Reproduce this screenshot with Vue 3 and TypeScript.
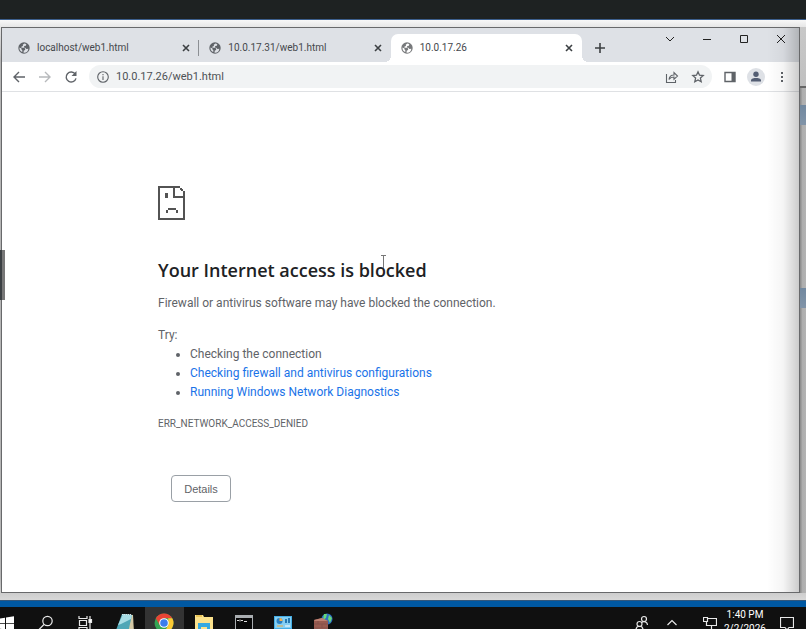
<script setup lang="ts">
import { ref } from 'vue'

interface Tab {
  id: number
  title: string
}

const tabs = ref<Tab[]>([
  { id: 1, title: 'localhost/web1.html' },
  { id: 2, title: '10.0.17.31/web1.html' },
  { id: 3, title: '10.0.17.26' },
])
const activeTab = ref(3)
const address = ref('10.0.17.26/web1.html')
</script>

<template>
  <div class="desktop">
    <div class="host-bar"></div>

    <div class="backdrop">
      <main class="browser">
        <header class="tab-strip">
          <div class="tabs">
            <div
              v-for="tab in tabs"
              :key="tab.id"
              class="tab"
              :class="{ active: tab.id === activeTab }"
            >
              <button class="tab-select" @click="activeTab = tab.id">
                <svg class="favicon" viewBox="0 0 16 16" aria-hidden="true">
                  <circle cx="8" cy="8" r="7.6" fill="currentColor" />
                  <path d="M8.5 2 6.300 3.500l.4 1.800-2 .8-.2 1.600h4l1.200 1.500-.4 1.600-1.700.7-.2 2.700a6 6 0 0 0 6.400-5.300l-2.600.3-1.500-1.700-1.700-.3.3-1.800 2.200-.4.6-1.700A6 6 0 0 0 8.500 2ZM2 7.300a6 6 0 0 0 3.500 6l.5-1.800-1.300-1.500V8.500Z" class="land" />
                </svg>
                <span>{{ tab.title }}</span>
              </button>
              <button class="tab-close" :aria-label="'Close ' + tab.title">
                <svg width="8" height="8" viewBox="0 0 8 8"><path d="m1 1 6 6M7 1 1 7" stroke="currentColor" stroke-width="1.6" /></svg>
              </button>
            </div>
          </div>
          <button class="new-tab" aria-label="New tab">
            <svg width="10" height="10" viewBox="0 0 10 10"><path d="M5 0v10M0 5h10" stroke="currentColor" stroke-width="1.6" /></svg>
          </button>
          <div class="window-controls">
            <button aria-label="Search tabs">
              <svg width="10" height="10" viewBox="0 0 10 10"><path d="m1 3 4 4 4-4" /></svg>
            </button>
            <button aria-label="Minimize">
              <svg width="10" height="10" viewBox="0 0 10 10"><path d="M1 5.500h8" /></svg>
            </button>
            <button aria-label="Maximize">
              <svg width="10" height="10" viewBox="0 0 10 10"><path d="M1.500 1.500h7v7h-7Z" /></svg>
            </button>
            <button aria-label="Close">
              <svg width="10" height="10" viewBox="0 0 10 10"><path d="m1 1 8 8M9 1 1 9" /></svg>
            </button>
          </div>
        </header>

        <nav class="toolbar">
          <button class="tool" aria-label="Back">
            <svg width="14" height="14" viewBox="0 0 14 14"><path d="M13 7H2m5-5L2 7l5 5" /></svg>
          </button>
          <button class="tool" aria-label="Forward" disabled>
            <svg width="14" height="14" viewBox="0 0 14 14"><path d="M1 7h11M7 2l5 5-5 5" /></svg>
          </button>
          <button class="tool" aria-label="Reload">
            <svg width="14" height="14" viewBox="0 0 14 14"><path d="M11.300 4.200A5 5 0 1 0 12 8.400" /><path d="M12.500 1v5h-5Z" class="solid" /></svg>
          </button>
          <div class="omnibox">
            <button class="small-tool" aria-label="Site information">
              <svg width="12" height="12" viewBox="0 0 12 12"><circle cx="6" cy="6" r="5.300" /><path d="M6 5.300v3.700M6 3v1.300" /></svg>
            </button>
            <input v-model="address" class="address" aria-label="Address" />
            <button class="small-tool" aria-label="Share">
              <svg width="14" height="14" viewBox="0 0 14 14"><path d="M1.500 4v8.500h9V10M4 9.500c.4-3 2-4.500 5-4.500V2.500L12.500 6 9 9.300V7C7 7 5.300 7.500 4 9.500Z" /></svg>
            </button>
            <button class="small-tool" aria-label="Bookmark this tab">
              <svg width="14" height="14" viewBox="0 0 14 14"><path d="m7 1.800 1.500 3.400 3.700.4-2.800 2.500.8 3.700L7 9.900l-3.200 1.900.8-3.700-2.800-2.500 3.700-.4Z" stroke-width="1.300" /></svg>
            </button>
          </div>
          <button class="tool" aria-label="Side panel">
            <svg width="12" height="12" viewBox="0 0 12 12"><path d="M1 1.500h10v9H1Z" /><path d="M7.500 1H11v10H7.500Z" class="solid" /></svg>
          </button>
          <button class="tool" aria-label="Profile">
            <svg width="18" height="18" viewBox="0 0 18 18"><circle cx="9" cy="9" r="9" class="disc" /><circle cx="9" cy="6.300" r="2.700" class="person" /><path d="M4 13.500v-1C4 10.500 7 10 9 10s5 .5 5 2.500v1Z" class="person" /></svg>
          </button>
          <button class="tool" aria-label="Menu">
            <svg width="4" height="12" viewBox="0 0 4 12"><path d="M1 1h2v2H1ZM1 5h2v2H1ZM1 9h2v2H1Z" class="solid" /></svg>
          </button>
        </nav>

        <section class="page">
          <svg class="sad-page" width="27" height="34" viewBox="0 0 27 34" aria-hidden="true">
            <path d="M0 0h22v2H2v30h23V12H15V2h2v8h8V5h2v29H0ZM22 2h2v2h-2ZM23 3h2v2h-2ZM7 7h3v5H7ZM10 22h8v2h-8ZM8 24h2v3H8ZM18 24h2v3h-2Z" />
          </svg>
          <h1>Your Internet access is blocked</h1>
          <p>Firewall or antivirus software may have blocked the connection.</p>
          <p class="try">Try:</p>
          <ul>
            <li>Checking the connection</li>
            <li><a href="#">Checking firewall and antivirus configurations</a></li>
            <li><a href="#">Running Windows Network Diagnostics</a></li>
          </ul>
          <div class="error-code">ERR_NETWORK_ACCESS_DENIED</div>
          <button class="details">Details</button>
        </section>

        <div class="edge-shade"></div>
      </main>
      <div class="edge">
        <div class="edge-head"></div>
        <div class="edge-rule"></div>
        <div class="edge-gap"></div>
        <div class="edge-select"></div>
        <div class="edge-body"></div>
        <div class="edge-select"></div>
      </div>
      <svg class="pointer" width="7" height="17" viewBox="0 0 7 17" aria-hidden="true"><path d="M1 .5h5M3.500 1v12" /></svg>
      <div class="side-handle"></div>
    </div>

    <div class="wallpaper"></div>

    <footer class="taskbar">
      <div class="taskbar-row">
        <button class="start" aria-label="Start">
          <svg width="14" height="15" viewBox="0 0 14 15"><path d="M0 2.500 5 1.700v5.500H0ZM6 1.500l8-1.300v7H6ZM0 8h5v5.500l-5-.8ZM6 8h8v7l-8-1.300Z" fill="#fff" /></svg>
        </button>
        <button class="task" aria-label="Search">
          <svg width="16" height="16" viewBox="0 0 16 16" class="line"><circle cx="9.500" cy="6" r="4.700" /><path d="m6 9.500-5 5" /></svg>
        </button>
        <button class="task" aria-label="Task view">
          <svg width="16" height="16" viewBox="0 0 16 16" class="line"><path d="M2 1v2.500h8V1M2.500 5.500h7v5h-7ZM2 15v-2.500h8V15M13 1v3M13 8v7" /><path d="M12 4.500h2.500v3H12Z" fill="#fff" /></svg>
        </button>
        <div class="apps">
          <button aria-label="Notepad">
            <svg width="20" height="22" viewBox="0 0 20 22"><path d="m8 2 10 1 1 17-5 1H2Z" fill="#d5c9a5" /><path d="m7 2 10 1-4 18H0Z" fill="#4fa6b6" /><path d="m8 2 9 1-1 4L6 12 3 13Z" fill="#a8dce4" /><path d="M7 2.500h10" stroke="#d9e6e8" stroke-dasharray="1 1" /></svg>
          </button>
          <button class="running" aria-label="Chrome">
            <svg width="20" height="20" viewBox="0 0 20 20"><circle cx="10" cy="10" r="9.500" fill="#34a353" /><path d="M1.800 5.300a9.500 9.500 0 0 1 16.500 0H10l-4 7.200Z" fill="#e94435" /><path d="M18.300 5.300A9.500 9.500 0 0 1 10 19.500l4.200-7.200V5.300Z" fill="#fcc934" /><circle cx="10" cy="10" r="4.800" fill="#fff" /><circle cx="10" cy="10" r="3.800" fill="#3b7ded" /></svg>
          </button>
          <button aria-label="File Explorer">
            <svg width="18" height="18" viewBox="0 0 18 18"><path d="M0 1h8l1 2h9v15H0Z" fill="#fce28c" /><path d="M1 2h6" stroke="#d6a524" /><path d="M3 9h12v9h-3v-5H6v5H3Z" fill="#35a9e1" /></svg>
          </button>
          <button aria-label="Command Prompt">
            <svg width="18" height="18" viewBox="0 0 18 18"><path d="M0 1h18v16H0Z" fill="#a9adb0" /><path d="M1 4h16v12H1Z" fill="#080808" /><path d="M2 6.500h2m1-1v2m1-1h2m1 1h3" stroke="#ddd" fill="none" /></svg>
          </button>
          <button aria-label="Control Panel">
            <svg width="18" height="16" viewBox="0 0 18 16"><path d="M0 1h18v14H0Z" fill="#45aee5" /><path d="M1 2h16v11H1Z" fill="#85cff3" /><circle cx="5.500" cy="6" r="3" fill="#277fc2" /><path d="M5.500 6V3a3 3 0 0 1 3 3Z" fill="#f4ae4b" /><path d="M11 4h2v4h-2ZM14 3h2v5h-2Z" fill="#2678af" /><path d="M3 11h6" stroke="#f1ab3b" /><path d="M11 11h5" stroke="#fff" /></svg>
          </button>
          <button aria-label="Firewall">
            <svg width="20" height="20" viewBox="0 0 20 20"><circle cx="14" cy="6" r="5.500" fill="#2d6fc4" /><path d="m11 1 3 0-1 4-3 2ZM16 2l3 3-2 5-2-4Z" fill="#67d878" /><path d="m1 7 8-2 6 3v11l-14 1Z" fill="#995b50" /><path d="m1 7 8-2 6 3H2Z" fill="#bd8172" /><path d="M1 11h14M1 15h14M5 8v3m4 0v4m-5 0v4" stroke="#85534a" /></svg>
          </button>
        </div>
        <div class="tray">
          <button aria-label="People">
            <svg width="14" height="16" viewBox="0 0 14 16" class="line"><circle cx="9" cy="4" r="2.500" /><path d="M6.500 7.500C9 5.500 12.500 7 12.500 10" /><circle cx="4.500" cy="9" r="2.500" /><path d="M1 15c0-5 7-5 7 0" /></svg>
          </button>
          <button aria-label="Show hidden icons">
            <svg width="10" height="8" viewBox="0 0 10 8" class="line"><path d="m.5 6 4.500-4.500L9.500 6" /></svg>
          </button>
          <button class="network" aria-label="Network">
            <svg width="14" height="14" viewBox="0 0 14 14" class="line"><path d="M5 2.500h8.500v7H3.500V6M.5 1.500h4v4h-4ZM8.500 10v3M5 13.500h7" /></svg>
          </button>
          <time class="clock"><span>1:40 PM</span><span>2/2/2026</span></time>
          <button class="notice" aria-label="Notifications">
            <svg width="14" height="15" viewBox="0 0 14 15" class="line"><path d="M.5 1.500h13v10H9l-2 2.500-2-2.500H.5Z" /></svg>
          </button>
        </div>
      </div>
    </footer>
  </div>
</template>

<style>
body {
  margin: 0;
}
</style>

<style scoped>
.desktop {
  display: flex;
  flex-direction: column;
  height: 100vh;
  overflow: hidden;
  font-family: Roboto, "Open Sans", sans-serif;
  color: #5f6368;
}

button {
  display: flex;
  align-items: center;
  justify-content: center;
  padding: 0;
  border: 0;
  background: none;
  color: inherit;
  font: inherit;
}

svg {
  flex: none;
}

.host-bar {
  flex: none;
  height: 19px;
  background: #1e2222;
  border-bottom: 1px solid #3c5f8d;
}

.backdrop {
  position: relative;
  flex: 1;
  display: flex;
  min-height: 0;
  padding: 7px 0 7px 1px;
  background: linear-gradient(#f8f8f8, #e6e6e6 7px, #b5b5b5 40px, #b5b5b5 96%, #d8d8d8);
}

.browser {
  position: relative;
  flex: 1;
  display: flex;
  flex-direction: column;
  border: 1px solid #68696b;
  background: #fff;
}

.tab-strip {
  flex: none;
  display: flex;
  height: 34px;
  background: #dee1e6;
}

.tabs {
  display: flex;
  align-items: flex-end;
  flex: 0 1 574px;
  padding-left: 6px;
}

.tab {
  position: relative;
  flex: 1;
  display: flex;
  align-items: center;
  min-width: 0;
  height: 28px;
  box-sizing: border-box;
  padding: 0 8px 0 10px;
}

.tab:first-child::after {
  content: "";
  width: 1px;
  height: 16px;
  position: absolute;
  right: 0;
  background: #8c8f94;
}

.tab.active {
  background: #fff;
  border-radius: 7px 7px 0 0;
}

.tab.active::before,
.tab.active::after {
  content: "";
  position: absolute;
  bottom: 0;
  width: 6px;
  height: 6px;
}

.tab.active::before {
  right: 100%;
  background: radial-gradient(circle at 0 0, #dee1e6 6px, #fff 6px);
}

.tab.active::after {
  left: 100%;
  background: radial-gradient(circle at 100% 0, #dee1e6 6px, #fff 6px);
}

.tab-select {
  flex: 1;
  justify-content: flex-start;
  gap: 7px;
  font-size: 10px;
  line-height: 14px;
  color: #45484c;
}

.favicon {
  width: 12px;
  height: 12px;
  color: #5f6368;
}

.land {
  fill: #dee1e6;
}

.active .favicon {
  color: #77797b;
}

.active .land {
  fill: #fff;
}

.tab-close {
  width: 10px;
  height: 16px;
  color: #3c4043;
}

.new-tab {
  width: 24px;
  padding: 6px 0 0;
  margin-left: 6px;
  color: #3c4043;
}

.window-controls {
  display: flex;
  margin-left: auto;
  height: 22px;
}

.window-controls button {
  width: 37px;
}

.window-controls path {
  fill: none;
  stroke: #222;
}

.toolbar {
  flex: none;
  display: flex;
  align-items: center;
  height: 29px;
  padding: 0 4px;
  border-bottom: 1px solid #dfe1e4;
}

.tool {
  width: 26px;
  height: 26px;
}

.tool svg,
.small-tool svg {
  fill: none;
  stroke: #5f6368;
  stroke-width: 1.4;
}

.small-tool svg {
  stroke-width: 1.1;
}

.tool:disabled svg {
  stroke: #b7b9bc;
}

.tool .solid {
  fill: #5f6368;
  stroke: none;
}

.tool .disc {
  fill: #dee1e6;
  stroke: none;
}

.tool .person {
  fill: #535d73;
  stroke: none;
}

.omnibox {
  flex: 1;
  display: flex;
  align-items: center;
  height: 23px;
  margin: 0 5px;
  padding: 0 1px;
  border-radius: 12px;
  background: #f1f3f4;
}

.small-tool {
  width: 26px;
  height: 22px;
}

.address {
  flex: 1;
  min-width: 0;
  padding: 0;
  border: 0;
  outline: 0;
  background: none;
  font: 11px/18px Roboto, "Open Sans", sans-serif;
  color: #4d5155;
}

.page {
  flex: 1;
  padding: 94px 156px 0;
  font-size: 12px;
  line-height: 19px;
}

.sad-page {
  display: block;
  fill: #535353;
}

h1 {
  margin: 38px 0 11px;
  font-family: "Open Sans", "Noto Sans", sans-serif;
  font-size: 18px;
  line-height: 25px;
  font-weight: 600;
  color: #202124;
}

p {
  margin: 0 0 13px;
}

p.try {
  margin: 0;
}

ul {
  margin: 0 0 13px;
  padding-left: 32px;
}

a {
  color: #1a73e8;
  text-decoration: none;
}

.error-code {
  font-size: 10px;
  line-height: 18px;
}

.details {
  width: 60px;
  height: 27px;
  margin: 42px 0 0 13px;
  border: 1px solid #9aa0a6;
  border-radius: 4px;
  font: 11px/16px "Liberation Sans", Roboto, sans-serif;
}

.edge-shade {
  position: absolute;
  top: 0;
  right: 0;
  bottom: 0;
  width: 32px;
  background: linear-gradient(90deg, transparent, rgba(0, 0, 0, 0.04) 50%, rgba(0, 0, 0, 0.2));
  pointer-events: none;
}

.edge {
  flex: none;
  display: flex;
  flex-direction: column;
  width: 6px;
  background: linear-gradient(90deg, #8f8f8f 1px, #adadad 2px, #b3b3b3);
}

.edge-head {
  height: 59px;
  background: linear-gradient(#c8c8c8, #c0c0c0);
}

.edge-rule {
  height: 2px;
  background: #666;
}

.edge-gap {
  height: 17px;
}

.edge-select {
  height: 20px;
  background: linear-gradient(#71889f, #8194a8);
}

.edge-body {
  height: 163px;
}

.pointer {
  position: absolute;
  top: 235px;
  left: 380px;
  fill: none;
  stroke: #777;
}

.side-handle {
  position: absolute;
  top: 230px;
  left: 0;
  width: 3px;
  height: 50px;
  border-left: 2px solid #3b4043;
  background: #777;
}

.wallpaper {
  flex: none;
  height: 6px;
  background: #0058a2;
  border-top: 1px solid #34577b;
}

.taskbar {
  flex: none;
  height: 22px;
  overflow: hidden;
  background: #101010;
  color: #fff;
}

.taskbar-row {
  display: flex;
  height: 32px;
}

.start {
  width: 26px;
  justify-content: flex-start;
}

.task {
  width: 39px;
}

.line {
  fill: none;
  stroke: #e8e8e8;
  stroke-width: 1.2;
}

.apps {
  display: grid;
  grid-template-columns: repeat(6, 1fr);
  width: 238px;
  margin-left: 1px;
}

.running {
  background: #333;
}

.tray {
  display: flex;
  margin-left: auto;
  padding-right: 4px;
}

.tray button {
  width: 30px;
}

.tray .network {
  width: 46px;
}

.clock {
  display: flex;
  flex-direction: column;
  align-items: center;
  width: 48px;
  margin-left: -12px;
  padding-top: 1px;
  font-size: 10px;
  line-height: 14px;
}

.tray .notice {
  margin-left: 3px;
}
</style>
